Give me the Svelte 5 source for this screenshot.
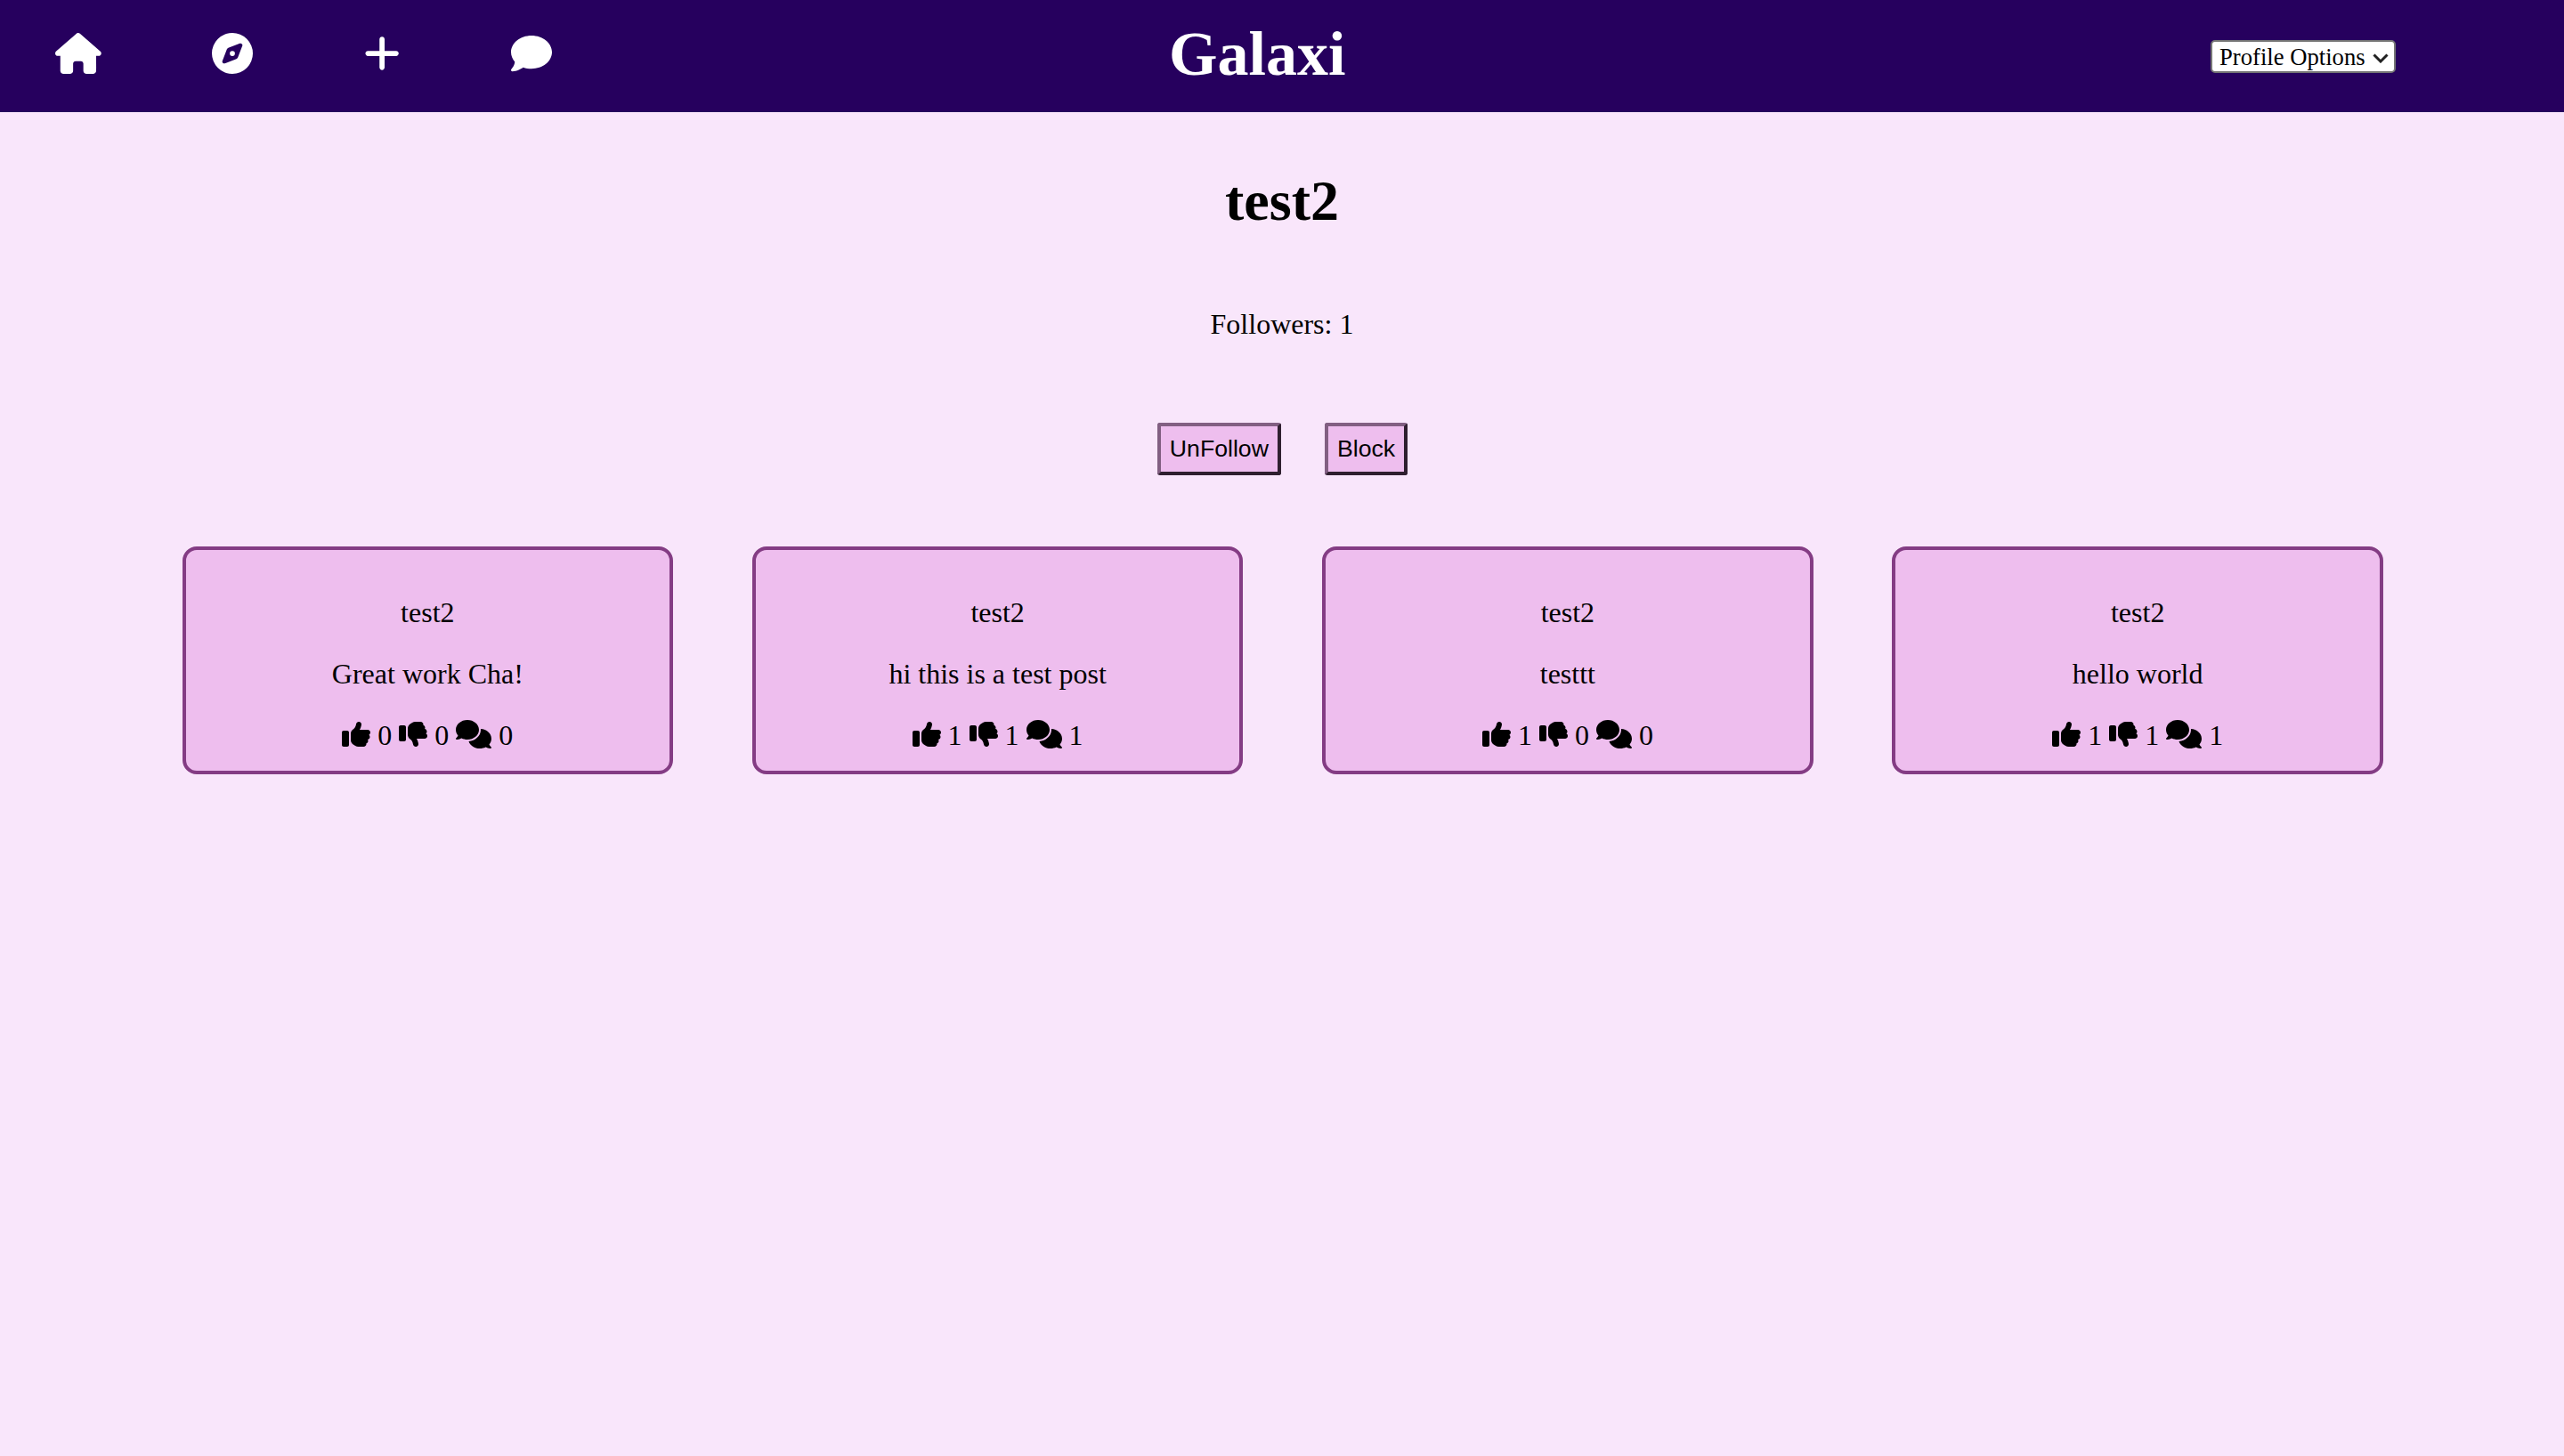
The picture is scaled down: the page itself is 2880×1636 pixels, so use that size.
<script>
  const posts = [
    { user: "test2", text: "Great work Cha!", likes: 0, dislikes: 0, comments: 0 },
    { user: "test2", text: "hi this is a test post", likes: 1, dislikes: 1, comments: 1 },
    { user: "test2", text: "testtt", likes: 1, dislikes: 0, comments: 0 },
    { user: "test2", text: "hello world", likes: 1, dislikes: 1, comments: 1 }
  ];
</script>

<nav class="topbar">
  <div class="nav-icons">
    <svg class="nav-icon" viewBox="0 0 576 512"><path d="M575.8 255.5c0 18-15 32.1-32 32.1h-32l.7 160.2c0 2.7-.2 5.4-.5 8.1V472c0 22.1-17.9 40-40 40H456c-1.1 0-2.2 0-3.3-.1c-1.4 .1-2.8 .1-4.2 .1H416 392c-22.1 0-40-17.9-40-40V448 384c0-17.7-14.3-32-32-32H256c-17.7 0-32 14.3-32 32v64 24c0 22.1-17.9 40-40 40H160 128.1c-1.5 0-3-.1-4.5-.2c-1.2 .1-2.4 .2-3.6 .2H104c-22.1 0-40-17.9-40-40V360c0-.9 0-1.9 .1-2.8V287.6H32c-18 0-32-14-32-32.1c0-9 3-17 10-24L266.4 8c7-7 15-8 22-8s15 2 21 7L564.8 231.5c8 7 12 15 11 24z"/></svg>
    <svg class="nav-icon" viewBox="0 0 512 512"><path d="M256 512A256 256 0 1 0 256 0a256 256 0 1 0 0 512zm50.7-186.9L162.4 380.6c-19.4 7.5-38.5-11.6-31-31l55.5-144.3c3.3-8.5 9.9-15.1 18.4-18.4l144.3-55.5c19.4-7.5 38.5 11.6 31 31L325.1 306.7c-3.2 8.5-9.9 15.1-18.4 18.4zM288 256a32 32 0 1 0 -64 0 32 32 0 1 0 64 0z"/></svg>
    <svg class="nav-icon" viewBox="0 0 448 512"><path d="M256 80c0-17.7-14.3-32-32-32s-32 14.3-32 32V224H48c-17.7 0-32 14.3-32 32s14.3 32 32 32H192V432c0 17.7 14.3 32 32 32s32-14.3 32-32V288H400c17.7 0 32-14.3 32-32s-14.3-32-32-32H256V80z"/></svg>
    <svg class="nav-icon" viewBox="0 0 512 512"><path d="M512 240c0 114.9-114.6 208-256 208c-37.1 0-72.3-6.4-104.1-17.9c-11.9 8.7-31.3 20.6-54.3 30.6C73.6 471.1 44.7 480 16 480c-6.5 0-12.3-3.9-14.8-9.9c-2.5-6-1.1-12.8 3.4-17.4l0 0 0 0 0 0 0 0 .3-.3c.3-.3 .7-.7 1.3-1.4c1.1-1.2 2.8-3.1 4.9-5.7c4.1-5 9.6-12.4 15.2-21.6c10-16.6 19.5-38.4 21.4-62.9C17.7 326.8 0 285.1 0 240C0 125.1 114.6 32 256 32s256 93.1 256 208z"/></svg>
  </div>
  <div class="brand">Galaxi</div>
  <div class="select-wrap">
    <select class="profile-select">
      <option>Profile Options</option>
    </select>
    <svg class="select-arrow" viewBox="0 0 18 11"><path d="M1.5 1.5 9 9l7.5-7.5"/></svg>
  </div>
</nav>

<main class="profile">
  <h1>test2</h1>
  <p class="followers">Followers: 1</p>
  <div class="actions">
    <button>UnFollow</button>
    <button>Block</button>
  </div>
  <div class="posts">
    {#each posts as post}
      <article class="post">
        <p>{post.user}</p>
        <p>{post.text}</p>
        <div class="stats">
          <svg class="stat-icon" viewBox="0 0 512 512"><path d="M313.4 32.9c26 5.2 42.9 30.5 37.7 56.5l-2.3 11.4c-5.3 26.7-15.1 52.1-28.8 75.2H464c26.5 0 48 21.5 48 48c0 18.5-10.5 34.6-25.9 42.6C497 275.4 504 288.9 504 304c0 23.4-16.8 42.9-38.9 47.1c4.4 7.3 6.9 15.8 6.9 24.9c0 21.3-13.9 39.4-33.1 45.6c.7 3.3 1.1 6.8 1.1 10.4c0 26.5-21.5 48-48 48H294.5c-19 0-37.5-5.6-53.3-16.1l-38.5-25.7C176 420.4 160 390.4 160 358.3V320 272 247.1c0-29.2 13.3-56.7 36-75l7.4-5.9c26.5-21.2 44.6-51 51.2-84.2l2.3-11.4c5.2-26 30.5-42.9 56.5-37.7zM32 192H96c17.7 0 32 14.3 32 32V448c0 17.7-14.3 32-32 32H32c-17.7 0-32-14.3-32-32V224c0-17.7 14.3-32 32-32z"/></svg>
          {post.likes}
          <svg class="stat-icon" viewBox="0 0 512 512"><path d="M313.4 479.1c26-5.2 42.9-30.5 37.7-56.5l-2.3-11.4c-5.3-26.7-15.1-52.1-28.8-75.2H464c26.5 0 48-21.5 48-48c0-18.5-10.5-34.6-25.9-42.6C497 236.6 504 223.1 504 208c0-23.4-16.8-42.9-38.9-47.1c4.4-7.3 6.9-15.8 6.9-24.9c0-21.3-13.9-39.4-33.1-45.6c.7-3.3 1.1-6.8 1.1-10.4c0-26.5-21.5-48-48-48H294.5c-19 0-37.5 5.6-53.3 16.1L202.7 73.8C176 91.6 160 121.6 160 153.7V192v48 24.9c0 29.2 13.3 56.7 36 75l7.4 5.9c26.5 21.2 44.6 51 51.2 84.2l2.3 11.4c5.2 26 30.5 42.9 56.5 37.7zM32 384H96c17.7 0 32-14.3 32-32V128c0-17.7-14.3-32-32-32H32C14.3 96 0 110.3 0 128V352c0 17.7 14.3 32 32 32z"/></svg>
          {post.dislikes}
          <svg class="stat-icon wide" viewBox="0 0 640 512"><path d="M208 352c114.9 0 208-78.8 208-176S322.9 0 208 0S0 78.8 0 176c0 38.6 14.7 74.3 39.6 103.4c-3.5 9.4-8.7 17.7-14.2 24.7c-4.8 6.2-9.7 11-13.3 14.3c-1.8 1.6-3.3 2.9-4.3 3.7c-.5 .4-.9 .7-1.1 .8l-.2 .2 0 0 0 0C1 327.2-1.4 334.4 .8 340.9S9.1 352 16 352c21.8 0 43.8-5.6 62.1-12.5c9.2-3.5 17.8-7.4 25.3-11.4C134.1 343.3 169.8 352 208 352zM448 176c0 112.3-99.1 196.9-216.5 207C255.8 457.4 336.4 512 432 512c38.2 0 73.9-8.7 104.7-23.9c7.5 4 16 7.9 25.2 11.4c18.3 6.9 40.3 12.5 62.1 12.5c6.9 0 13.1-4.5 15.2-11.1c2.1-6.6-.2-13.8-5.8-17.9l0 0 0 0-.2-.2c-.2-.2-.6-.4-1.1-.8c-1-.8-2.5-2-4.3-3.7c-3.6-3.3-8.5-8.1-13.3-14.3c-5.5-7-10.7-15.4-14.2-24.7c24.9-29 39.6-64.7 39.6-103.4c0-92.8-84.9-168.9-192.6-175.5c.4 5.1 .6 10.3 .6 15.5z"/></svg>
          {post.comments}
        </div>
      </article>
    {/each}
  </div>
</main>

<style>
  :global(body) { background: #f9e6fb; font-family: "Liberation Serif", "Times New Roman", serif; font-size: 32px; color: #000; }
  .topbar { display: flex; align-items: center; height: 126px; background: #26005e; padding-left: 62px; }
  .nav-icons { display: flex; align-items: center; gap: 124.5px; width: 1251px; margin-bottom: 7px; }
  .nav-icon { height: 46px; width: auto; fill: #fff; display: block; }
  .brand { width: 200px; color: #fff; font-weight: bold; font-size: 70px; margin-bottom: 4px; }
  .select-wrap { position: relative; margin-left: 970px; margin-top: 1px; display: flex; }
  .profile-select { appearance: none; box-sizing: border-box; width: 207.5px; padding: 1.5px 32px 1.5px 8px; font-family: "Liberation Serif", serif; font-size: 26.67px; background: #fff; color: #000; border: 2px solid #767676; border-radius: 5px; }
  .select-arrow { position: absolute; right: 8px; top: 15px; width: 18px; height: 11px; fill: none; stroke: #222; stroke-width: 3px; pointer-events: none; }
  .profile { padding-top: 20px; text-align: center; }
  h1 { margin: 43px 0; font-size: 64px; }
  .followers { margin: 83px 0 0; }
  .actions { display: flex; justify-content: center; gap: 49px; margin-top: 92px; padding-left: 1px; }
  button { font-family: "Liberation Sans", Arial, sans-serif; font-size: 26.67px; color: #000; background: #eebeee; padding: 10px; border-style: solid; border-width: 4px; border-color: #825f82 #2f1f2f #2f1f2f #825f82; border-radius: 3px; }
  .posts { display: grid; grid-template-columns: repeat(4, 1fr); gap: 88.6px; margin: 80px 203px 0 204.5px; }
  .post { background: #eebeee; border: 4px solid #843c84; border-radius: 16px; padding: 20px 20px 21px; }
  .post p { margin: 32px 0; }
  .stat-icon { height: 32px; width: 32px; vertical-align: -4px; }
  .stat-icon.wide { width: 40px; }
</style>
